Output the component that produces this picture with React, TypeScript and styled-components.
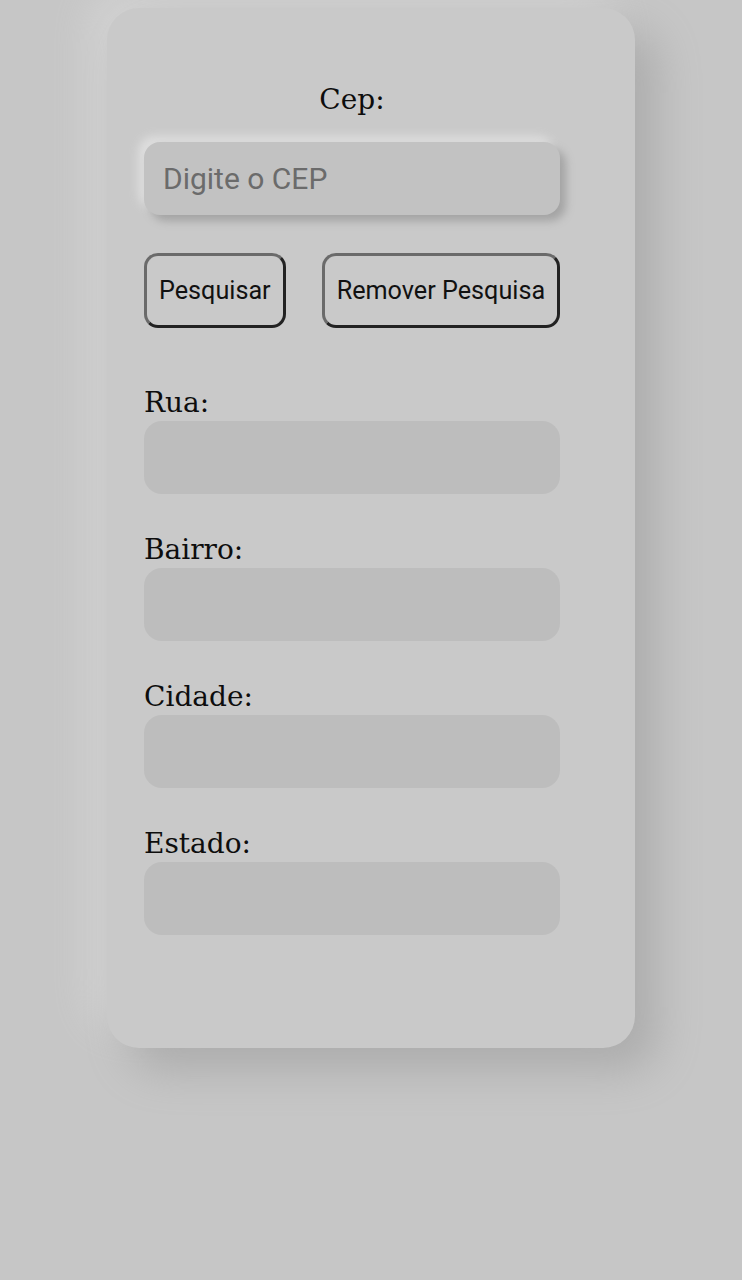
import React from "react";
import styled, { createGlobalStyle } from "styled-components";

const GlobalStyle = createGlobalStyle`
  html, body {
    margin: 0;
    padding: 0;
    background: #c6c6c6;
    min-height: 1280px;
  }
  body {
    padding-top: 8px;
    font-family: "DejaVu Serif", serif;
  }
`;

const Card = styled.main`
  width: 528px;
  height: 1040px;
  box-sizing: border-box;
  margin: 0 auto;
  padding: 75px 0 0 37px;
  background: #c9c9c9;
  border-radius: 32px;
  box-shadow: 22px 22px 44px #acacac, -18px -18px 40px #d3d3d3;
`;

const Form = styled.div`
  width: 416px;
  display: flex;
  flex-direction: column;
`;

const Label = styled.label<{ $center?: boolean }>`
  display: block;
  font-family: "DejaVu Serif", serif;
  font-size: 28px;
  line-height: 34px;
  color: #0d0d0d;
  text-align: ${(p) => (p.$center ? "center" : "left")};
`;

const CepInput = styled.input`
  margin-top: 25px;
  height: 73px;
  box-sizing: border-box;
  border: none;
  border-radius: 16px;
  background: #c2c2c2;
  padding: 0 19px;
  font-family: Roboto, sans-serif;
  font-size: 30px;
  color: #222;
  outline: none;
  box-shadow: 6px 6px 8px #a4a4a4, -6px -6px 10px #dedede;
  &::placeholder {
    color: #6b6b6b;
  }
`;

const ButtonRow = styled.div`
  display: flex;
  gap: 36px;
  margin-top: 38px;
  margin-bottom: 58px;
`;

const Button = styled.button`
  flex: 0 0 auto;
  white-space: nowrap;
  height: 75px;
  padding: 0 12px;
  border-style: solid;
  border-width: 3px;
  border-color: #6a6a6a #222 #222 #6a6a6a;
  border-radius: 14px;
  background: #c9c9c9;
  font-family: Roboto, sans-serif;
  font-size: 25.2px;
  color: #111;
`;

const Field = styled.div`
  display: flex;
  flex-direction: column;
  & + & {
    margin-top: 39px;
  }
`;

const FieldInput = styled.input`
  margin-top: 1px;
  height: 73px;
  box-sizing: border-box;
  border: none;
  border-radius: 18px;
  background: #bdbdbd;
  outline: none;
`;

const fields = ["Rua:", "Bairro:", "Cidade:", "Estado:"];

export default function App() {
  return (
    <>
      <GlobalStyle />
      <Card>
        <Form>
          <Label $center>Cep:</Label>
          <CepInput placeholder="Digite o CEP" />
          <ButtonRow>
            <Button>Pesquisar</Button>
            <Button>Remover Pesquisa</Button>
          </ButtonRow>
          {fields.map((f) => (
            <Field key={f}>
              <Label>{f}</Label>
              <FieldInput />
            </Field>
          ))}
        </Form>
      </Card>
    </>
  );
}
